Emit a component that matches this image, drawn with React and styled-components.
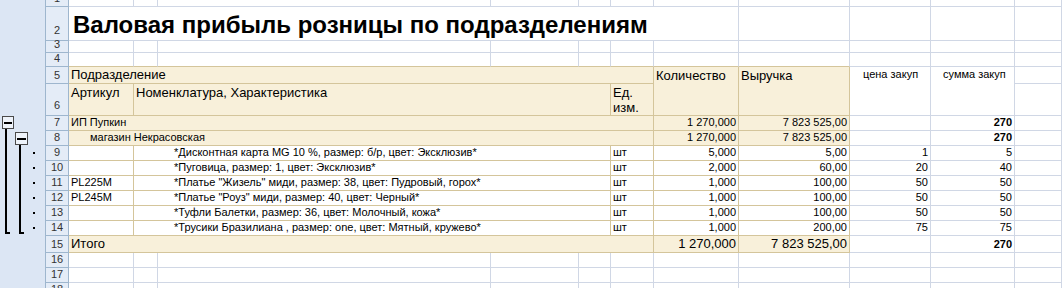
import React from 'react';
import styled, {createGlobalStyle} from 'styled-components';

const CREAM = '#f8f0da';
const TAN = '#d4c59b';
const GRID = '#d0d7e5';
const HEAD_LINE = '#9eb6ce';

const GlobalStyle = createGlobalStyle`
  html, body {
    margin: 0;
    padding: 0;
    background: #fff;
    overflow: hidden;
  }
  body {
    font-family: "Liberation Sans", Arial, sans-serif;
    color: #000;
  }
`;

const Window = styled.div`
  display: flex;
  width: 1062px;
  height: 288px;
  overflow: hidden;
  background: #fff;
`;

const Gutter = styled.div`
  flex: 0 0 45px;
  background: #dce6f4;
`;

const Sheet = styled.div`
  flex: 1;
  display: grid;
  grid-template-columns: 24px 65px 24px 333px 88px 32px 43px 85px 111px 81px 84px 1fr;
  grid-template-rows: 15px 34px 12px 14px 17px 32px repeat(8, 15px) 17px 15px 15px 15px;
  margin-top: -8px;
  align-content: start;
`;

const RowHead = styled.div`
  box-sizing: border-box;
  display: flex;
  align-items: flex-end;
  justify-content: center;
  padding-bottom: ${p => (p.$tall ? 3 : 1)}px;
  background: #e4ecf7;
  border-left: 1px solid ${HEAD_LINE};
  border-right: 1px solid ${HEAD_LINE};
  border-bottom: 1px solid ${HEAD_LINE};
  font-size: 11px;
  line-height: 13px;
  color: #333;
`;

const Cell = styled.div`
  box-sizing: border-box;
  display: flex;
  min-width: 0;
  align-items: ${p => (p.$top ? 'flex-start' : 'flex-end')};
  justify-content: ${p => (p.$right ? 'flex-end' : 'flex-start')};
  grid-column: span ${p => p.$span || 1};
  grid-row: span ${p => p.$rows || 1};
  padding: ${p => (p.$top ? '1px' : '0')} 2px ${p => (p.$top ? '0' : '1px')} ${p => p.$indent || 2}px;
  background: ${p => (p.$cream ? CREAM : '#fff')};
  border-right: 1px solid ${p => (p.$tan ? TAN : GRID)};
  border-bottom: 1px solid ${p => (p.$tan || p.$tanBottom ? TAN : GRID)};
  font-size: ${p => p.$size || 11}px;
  font-weight: ${p => (p.$bold ? 700 : 400)};
  line-height: ${p => (p.$size === 13 ? 15 : 13)}px;
  white-space: ${p => (p.$wrap ? 'normal' : 'nowrap')};
  overflow: hidden;
`;

const Title = styled(Cell)`
  font-size: 24px;
  font-weight: 700;
  line-height: 26px;
  padding-bottom: 2px;
  padding-left: 4px;
  overflow: visible;
`;

const Outline = () => (
  <svg width="45" height="288" viewBox="0 0 45 288">
    <rect x="2.5" y="116.5" width="11" height="12" fill="#eef3fa" stroke="#4a4a4a" />
    <rect x="4" y="122" width="8" height="2" fill="#000" />
    <rect x="5" y="129" width="2" height="105" fill="#000" />
    <rect x="5" y="232" width="5" height="2" fill="#000" />
    <rect x="15.5" y="132.5" width="12" height="12" fill="#eef3fa" stroke="#4a4a4a" />
    <rect x="17" y="138" width="9" height="2" fill="#000" />
    <rect x="19" y="145" width="2" height="89" fill="#000" />
    <rect x="19" y="232" width="5" height="2" fill="#000" />
    {[152, 167, 182, 197, 212, 227].map(y => (
      <rect key={y} x="33" y={y} width="2" height="2" fill="#000" />
    ))}
  </svg>
);

const items = [
  ['', '*Дисконтная карта MG 10 %, размер: б/р, цвет: Эксклюзив*', '5,000', '5,00', '1', '5'],
  ['', '*Пуговица, размер: 1, цвет: Эксклюзив*', '2,000', '60,00', '20', '40'],
  ['PL225M', '*Платье "Жизель" миди, размер: 38, цвет: Пудровый, горох*', '1,000', '100,00', '50', '50'],
  ['PL245M', '*Платье "Роуз" миди, размер: 40, цвет: Черный*', '1,000', '100,00', '50', '50'],
  ['', '*Туфли Балетки, размер: 36, цвет: Молочный, кожа*', '1,000', '100,00', '50', '50'],
  ['', '*Трусики Бразилиана , размер: one, цвет: Мятный, кружево*', '1,000', '200,00', '75', '75'],
];

const EmptyRow = ({n, tanBottom}) => (
  <>
    <RowHead>{n}</RowHead>
    {Array.from({length: 11}, (_, i) => (
      <Cell key={i} $tanBottom={tanBottom && i < 8} />
    ))}
  </>
);

const GroupRow = ({n, label, indent, size}) => (
  <>
    <RowHead>{n}</RowHead>
    <Cell $span={6} $cream $tan $indent={indent} $size={size}>{label}</Cell>
    <Cell $cream $tan $right $size={size}>1 270,000</Cell>
    <Cell $cream $tan $right $size={size}>7 823 525,00</Cell>
    <Cell />
    <Cell $right $bold>270</Cell>
    <Cell />
  </>
);

const App = () => (
  <Window>
    <GlobalStyle />
    <Gutter>
      <Outline />
    </Gutter>
    <Sheet>
      <EmptyRow n={1} />

      <RowHead $tall>2</RowHead>
      <Title $span={7}>Валовая прибыль розницы по подразделениям</Title>
      <Cell />
      <Cell />
      <Cell />
      <Cell />

      <EmptyRow n={3} />
      <EmptyRow n={4} tanBottom />

      <RowHead>5</RowHead>
      <Cell $span={6} $cream $tan $size={13}>Подразделение</Cell>
      <Cell $rows={2} $cream $tan $top $size={13}>Количество</Cell>
      <Cell $rows={2} $cream $tan $top $size={13}>Выручка</Cell>
      <Cell $rows={2} $top $indent={13}>цена закуп</Cell>
      <Cell $rows={2} $top $indent={12}>сумма закуп</Cell>
      <Cell />

      <RowHead $tall>6</RowHead>
      <Cell $cream $tan $top $size={13}>Артикул</Cell>
      <Cell $span={4} $cream $tan $top $size={13}>Номенклатура, Характеристика</Cell>
      <Cell $cream $tan $top $wrap $size={13}>Ед. изм.</Cell>
      <Cell />

      <GroupRow n={7} label="ИП Пупкин" />
      <GroupRow n={8} label="магазин Некрасовская" indent={21} />

      {items.map(([art, name, qty, sum, price, cost], i) => (
        <React.Fragment key={i}>
          <RowHead>{9 + i}</RowHead>
          <Cell $tan>{art}</Cell>
          <Cell $span={4} $tan $indent={40}>{name}</Cell>
          <Cell $tan>шт</Cell>
          <Cell $tan $right>{qty}</Cell>
          <Cell $tan $right>{sum}</Cell>
          <Cell $right>{price}</Cell>
          <Cell $right>{cost}</Cell>
          <Cell />
        </React.Fragment>
      ))}

      <GroupRow n={15} label="Итого" size={13} />

      <EmptyRow n={16} />
      <EmptyRow n={17} />
      <EmptyRow n={18} />
    </Sheet>
  </Window>
);

export default App;
